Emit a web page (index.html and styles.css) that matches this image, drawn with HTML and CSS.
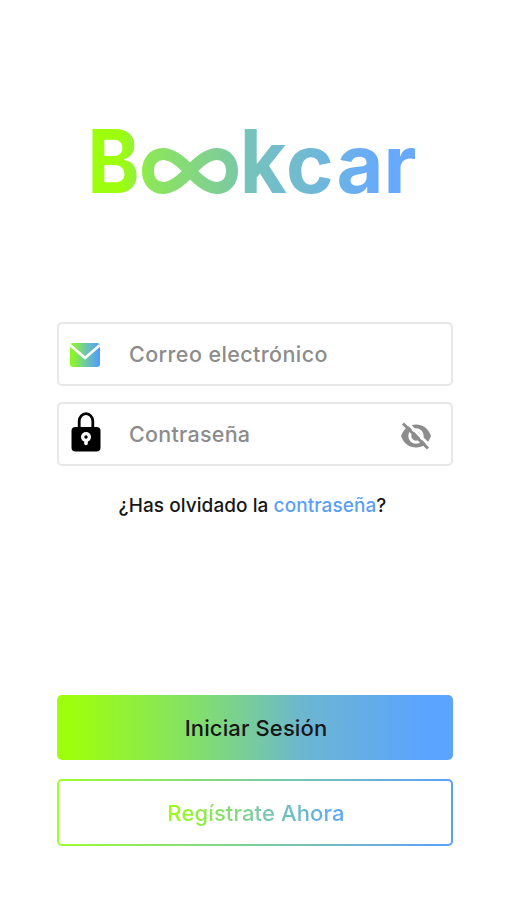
FILE: index.html
```html
<!DOCTYPE html>
<html lang="es">
<head>
  <meta charset="UTF-8">
  <title>Bookcar</title>
  <link rel="stylesheet" href="styles.css">
</head>
<body>

  <main class="login">
    <svg class="logo" viewBox="0 0 330 80" role="img" aria-label="Bookcar">
      <defs>
        <linearGradient id="brand" gradientUnits="userSpaceOnUse" x1="3" y1="0" x2="327" y2="0">
          <stop offset="0.1" stop-color="#9dff0d"/>
          <stop offset="0.18" stop-color="#8ce65a"/>
          <stop offset="0.45" stop-color="#7bc9a5"/>
          <stop offset="0.5" stop-color="#78c5b5"/>
          <stop offset="0.9" stop-color="#66a9ff"/>
        </linearGradient>
      </defs>
      <text class="logo-text" fill="url(#brand)" transform="scale(0.9 1)" y="73" x="-2">B</text>
      <path d="M101 51 C91 40 82 34 74 34 C65 34 59 41 59 51 C59 61 65 68 74 68 C82 68 91 62 101 51 C111 40 120 34 128 34 C137 34 143 41 143 51 C143 61 137 68 128 68 C120 68 111 62 101 51 Z" fill="none" stroke="url(#brand)" stroke-width="12"/>
      <text class="logo-text" fill="url(#brand)" transform="scale(0.92 1)" y="73" x="164">k</text>
      <text class="logo-text small" fill="url(#brand)" y="73" x="197 247.5 294.5">car</text>
    </svg>

    <form class="form">
      <label class="field">
        <svg class="mail" viewBox="0 0 30 24">
          <defs>
            <linearGradient id="mailFill">
              <stop offset="0.1" stop-color="#8cf52a"/>
              <stop offset="0.5" stop-color="#70c9a5"/>
              <stop offset="1" stop-color="#4f9aff"/>
            </linearGradient>
          </defs>
          <rect width="30" height="24" rx="3" fill="url(#mailFill)"/>
          <path d="M0 2 L15 15 L30 2" fill="none" stroke="#fff" stroke-width="2.8"/>
        </svg>
        <input class="email" type="text" placeholder="Correo electrónico">
      </label>

      <label class="field">
        <svg class="lock" viewBox="0 0 30 40">
          <path d="M8.2 16 V9 a6.8 7.3 0 0 1 13.6 0 V16" fill="none" stroke="#000" stroke-width="2.8"/>
          <rect x="0.5" y="15" width="29" height="24.5" rx="4" fill="#000"/>
          <circle cx="15" cy="25" r="5" fill="#fff"/>
          <path d="M15 25 V31.5" stroke="#fff" stroke-width="3.6" stroke-linecap="round"/>
          <circle cx="15" cy="25" r="1.7" fill="#000"/>
        </svg>
        <input class="password" type="password" placeholder="Contraseña">
        <svg class="eye" viewBox="0 0 32 28">
          <path d="M1 14 C4 6 9.5 2.5 16 2.5 S28 6 31 14 C28 22 22.5 25.5 16 25.5 S4 22 1 14 Z" fill="#8c8c8c"/>
          <circle cx="16" cy="14" r="6.2" fill="none" stroke="#fff" stroke-width="3"/>
          <path d="M6.5 0 L31 25" stroke="#fff" stroke-width="3"/>
          <path d="M3 1.5 L28 26.5" stroke="#8c8c8c" stroke-width="3"/>
        </svg>
      </label>
    </form>

    <p class="forgot">¿Has olvidado la <a>contraseña</a>?</p>

    <div class="buttons">
      <button class="btn signin">Iniciar Sesión</button>
      <button class="btn register"><span>Regístrate Ahora</span></button>
    </div>
  </main>

</body>
</html>
```

FILE: styles.css
```css
body {
  margin: 0;
  background: #fff;
  font-family: Inter, "Liberation Sans", sans-serif;
}
.login {
  display: flex;
  flex-direction: column;
  width: 396px;
  margin-left: 57px;
  padding-top: 120px;
}
.logo {
  width: 330px;
  height: 80px;
  margin-left: 32px;
  overflow: visible;
}
.logo-text {
  font-size: 88px;
  font-weight: 700;
}
.logo-text.small {
  font-size: 81px;
}
.form {
  display: flex;
  flex-direction: column;
  gap: 16px;
  margin-top: 122px;
}
.field {
  display: flex;
  align-items: center;
  box-sizing: border-box;
  height: 64px;
  padding: 0 19px 0 11px;
  border: 2px solid #e8e8e8;
  border-radius: 5px;
}
.field input {
  flex: 1;
  min-width: 0;
  margin-left: 29px;
  padding: 0;
  border: 0;
  outline: 0;
  background: none;
  font-family: inherit;
  font-size: 21.5px;
  font-weight: 500;
  letter-spacing: 0.25px;
}
.field input::placeholder {
  color: #8c8c8c;
  opacity: 1;
}
.field .email {
  letter-spacing: 0.4px;
}
.mail {
  width: 30px;
  height: 24px;
  margin-top: 1px;
}
.lock {
  width: 30px;
  height: 40px;
  margin: 0 -1px 5px 1px;
}
.eye {
  width: 32px;
  height: 28px;
  margin-top: 3px;
}
.forgot {
  margin: 28px 0 0;
  padding-right: 5px;
  text-align: center;
  font-size: 19px;
  font-weight: 500;
  line-height: 24px;
  letter-spacing: 0.07px;
  color: #171717;
}
.forgot a {
  color: #5b9ff5;
}
.buttons {
  display: flex;
  flex-direction: column;
  gap: 19px;
  margin-top: 177px;
}
.btn {
  box-sizing: border-box;
  height: 65px;
  padding: 0;
  border: 0;
  border-radius: 5px;
  font-family: inherit;
  font-size: 22px;
  font-weight: 500;
  letter-spacing: 0.12px;
  color: #171717;
}
.signin {
  padding-left: 2px;
  background: linear-gradient(90deg, #9dff0d 4%, #80dc75 38%, #76caa0 50%, #6cb6d0 62%, #5ba4ff 93%);
}
.register {
  height: 67px;
  padding-left: 2px;
  border: 2px solid transparent;
  background:
    linear-gradient(#fff, #fff) padding-box,
    linear-gradient(90deg, #9dff2d, #7ccf9c 50%, #5b9fff) border-box;
}
.register span {
  background: linear-gradient(90deg, #9dff0d, #7bcca0 50%, #5ba4ff);
  -webkit-background-clip: text;
  background-clip: text;
  color: transparent;
}
```
